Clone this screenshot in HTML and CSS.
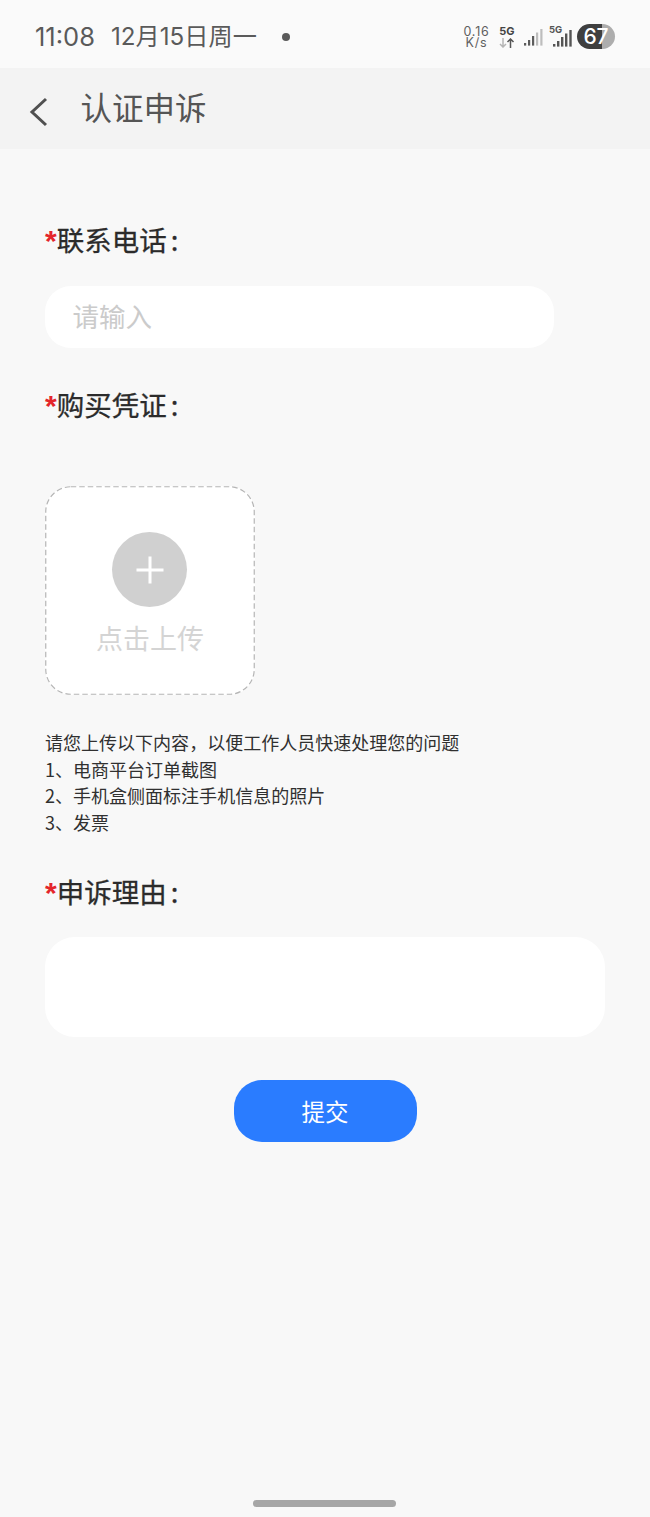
FILE: index.html
```html
<!DOCTYPE html>
<html lang="zh-CN">
<head>
<meta charset="utf-8">
<title>认证申诉</title>
<link rel="stylesheet" href="styles.css">
</head>
<body>
<div class="page">
  <div class="status">
    <div class="status-left">
      <span class="time">11:08</span>
      <span class="date">12月15日周一</span>
      <span class="dot"></span>
    </div>
    <div class="status-right">
      <div class="speed"><span>0.16</span><span>K/s</span></div>
      <div class="net"><span class="net-label">5G</span>
        <svg class="net-arrows" width="16" height="10" viewBox="0 0 16 10"><path d="M4 0v9M1 6l3 3 3-3" fill="none" stroke="#b5b5b5" stroke-width="1.5"/><path d="M11.500 10V1M8.500 4l3-3 3 3" fill="none" stroke="#555" stroke-width="1.5"/></svg>
      </div>
      <svg class="signal signal-one" width="19" height="18" viewBox="0 0 19 18"><g fill="#5c5c5c"><rect x="0" y="15" width="2.200" height="2.600"/><rect x="4" y="12" width="2.200" height="5.600"/><rect x="8" y="8" width="2.200" height="9.600"/></g><g fill="#bdbdbd"><rect x="12" y="4.500" width="2.200" height="13.100"/><rect x="16.300" y="1" width="2.200" height="16.600"/></g></svg>
      <div class="signal-wrap">
        <span class="sig-label">5G</span>
        <svg class="signal" width="19" height="18" viewBox="0 0 19 18"><g fill="#555"><rect x="0" y="15" width="2.400" height="2.600"/><rect x="4" y="12" width="2.400" height="5.600"/><rect x="8" y="8" width="2.400" height="9.600"/><rect x="12" y="4.500" width="2.400" height="13.100"/><rect x="16.300" y="1" width="2.400" height="16.600"/></g></svg>
      </div>
      <div class="battery"><span class="battery-num">67</span></div>
    </div>
  </div>
  <div class="nav">
    <svg class="back" width="20" height="30" viewBox="0 0 20 30"><path d="M17 2 3 15l14 13" fill="none" stroke="#505050" stroke-width="3"/></svg>
    <span class="nav-title">认证申诉</span>
  </div>
  <div class="form">
    <div class="label label-first"><span class="star">*</span>联系电话<span class="colon">:</span></div>
    <div class="input"><span class="placeholder">请输入</span></div>
    <div class="label label-proof"><span class="star">*</span>购买凭证<span class="colon">:</span></div>
    <div class="upload">
      <svg class="upload-border" width="210" height="209" viewBox="0 0 210 209"><rect x="0.750" y="0.750" width="208.500" height="207.500" rx="25" fill="none" stroke="#b5b5b5" stroke-width="1.200" stroke-dasharray="5.500 3"/></svg>
      <div class="plus-circle">
        <svg width="30" height="30" viewBox="0 0 30 30"><path d="M15 1.500v27M1.500 15h27" stroke="#fff" stroke-width="3" fill="none"/></svg>
      </div>
      <span class="upload-text">点击上传</span>
    </div>
    <div class="hints">
      <p>请您上传以下内容，以便工作人员快速处理您的问题</p>
      <p>1、电商平台订单截图</p>
      <p>2、手机盒侧面标注手机信息的照片</p>
      <p>3、发票</p>
    </div>
    <div class="label label-reason"><span class="star">*</span>申诉理由<span class="colon">:</span></div>
    <div class="textarea"></div>
    <div class="submit-row"><div class="submit">提交</div></div>
  </div>
  <div class="home-bar"></div>
</div>
</body>
</html>
```
FILE: styles.css
```css
* { box-sizing: border-box; }
html, body { margin: 0; padding: 0; }
body { width: 650px; height: 1517px; overflow: hidden; background: #f8f8f8; font-family: "Noto Sans CJK SC", "Noto Sans", sans-serif; }
.page { position: relative; width: 650px; height: 1517px; display: flex; flex-direction: column; }
.status { height: 68px; background: #fafafa; display: flex; align-items: center; justify-content: space-between; padding: 5px 35px 0 35px; color: #5a5a5a; }
.status-left { display: flex; align-items: center; font-size: 24px; line-height: 30px; }
.time { font-family: Inter, sans-serif; font-weight: 400; font-size: 25.500px; width: 76px; }
.date { font-family: Inter, "Noto Sans CJK SC", sans-serif; font-weight: 400; font-size: 24.200px; width: 146px; white-space: nowrap; }
.dot { width: 8px; height: 8px; border-radius: 50%; background: #5a5a5a; margin-left: 25px; }
.status-right { display: flex; align-items: center; gap: 9px; }
.speed { display: flex; flex-direction: column; align-items: center; font-family: Inter, sans-serif; font-size: 12.500px; letter-spacing: 0.800px; line-height: 11px; color: #5f5f5f; width: 27px; }
.net { display: flex; flex-direction: column; align-items: center; width: 16px; }
.net-label { font-family: Inter, sans-serif; font-weight: 700; font-size: 11px; line-height: 11px; color: #444; }
.net-arrows { display: block; margin-top: 1px; }
.signal { display: block; }
.signal-one { margin-top: 1px; }
.signal-wrap { position: relative; margin-left: 1px; padding-top: 2px; }
.sig-label { position: absolute; left: -4px; top: -2px; font-family: Inter, sans-serif; font-weight: 700; font-size: 9.500px; line-height: 10px; color: #555; }
.battery { width: 38px; height: 25px; border-radius: 13px; background: linear-gradient(to right, #3f3f3f 0 66%, #adadad 66% 100%); display: flex; align-items: center; justify-content: center; margin-left: -4px; }
.battery-num { font-family: Inter, sans-serif; font-weight: 500; font-size: 21px; line-height: 24px; color: #fff; }
.nav { height: 81px; background: #f3f3f3; display: flex; align-items: center; padding-left: 29px; }
.back { display: block; margin-top: 6px; }
.nav-title { margin-left: 31.500px; margin-bottom: 6px; font-size: 31.500px; line-height: 40px; color: #555; }
.form { padding: 0 45px; display: flex; flex-direction: column; align-items: flex-start; }
.label { font-size: 27.500px; line-height: 38px; color: #2b2b2b; white-space: nowrap; font-weight: 400; -webkit-text-stroke: 0.300px #2b2b2b; }
.star { color: #e4262b; font-family: "Liberation Sans", sans-serif; font-size: 30px; font-weight: 700; -webkit-text-stroke: 0; }
.colon { margin-left: 4px; }
.label-first { margin-top: 71px; }
.input { width: 509px; height: 62px; margin-top: 26px; background: #fff; border-radius: 26px; display: flex; align-items: flex-start; padding: 12px 0 0 27.500px; }
.placeholder { font-size: 26.500px; line-height: 36px; color: #cbcbcb; }
.label-proof { margin-top: 37px; }
.upload { position: relative; width: 210px; height: 209px; margin-top: 61px; background: #fff; border-radius: 26px; display: flex; flex-direction: column; align-items: center; padding-top: 46px; }
.upload-border { position: absolute; left: 0; top: 0; display: block; }
.plus-circle { width: 75px; height: 75px; border-radius: 50%; background: #d0d0d0; display: flex; align-items: center; justify-content: center; margin-left: -1px; }
.plus-circle svg { display: block; }
.upload-text { margin-top: 13px; font-size: 27px; line-height: 36px; color: #d4d4d4; }
.hints { margin-top: 34px; }
.hints p { margin: 0; font-size: 18.030px; line-height: 26.500px; color: #303030; white-space: nowrap; }
.label-reason { margin-top: 37px; }
.textarea { width: 560px; height: 100px; margin-top: 25px; background: #fff; border-radius: 30px; }
.submit-row { width: 560px; display: flex; justify-content: center; margin-top: 43px; }
.submit { width: 183px; height: 62px; border-radius: 28px; background: #2a7cff; color: #fff; font-size: 23.500px; line-height: 62px; text-align: center; }
.home-bar { position: absolute; left: 253px; top: 1500px; width: 143px; height: 7px; border-radius: 4px; background: #a6a6a6; }
```
